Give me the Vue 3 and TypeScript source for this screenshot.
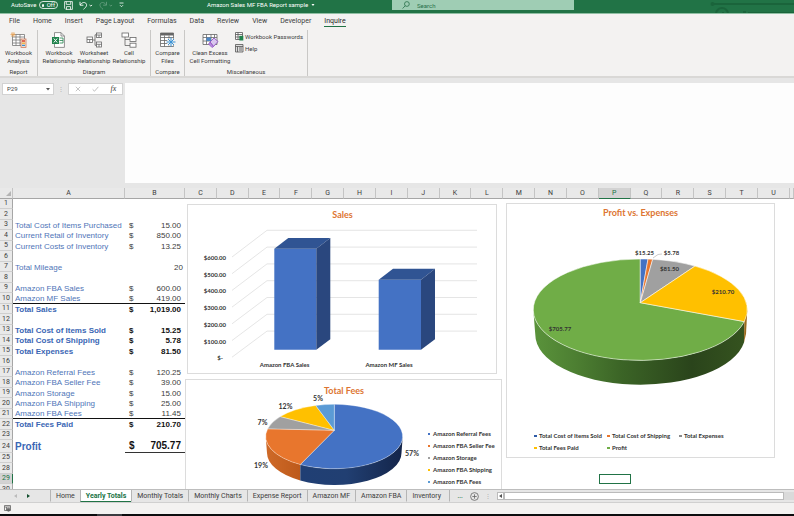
<script setup lang="ts">
import { ref } from 'vue'

interface SheetRow {
  n: number
  label?: string
  amount?: string
  kind?: 'plain' | 'bold' | 'count' | 'profit'
  ruled?: boolean
}

const ribbonTabs: string[] = ['File', 'Home', 'Insert', 'Page Layout', 'Formulas', 'Data', 'Review', 'View', 'Developer', 'Inquire']
const activeRibbon = ref('Inquire')

const sheetTabs: string[] = ['Home', 'Yearly Totals', 'Monthly Totals', 'Monthly Charts', 'Expense Report', 'Amazon MF', 'Amazon FBA', 'Inventory']
const activeSheet = ref('Yearly Totals')

const cellName = ref('P29')
const formula = ref('')
const query = ref('')

const columns: string[] = 'CDEFGHIJKLMNOPQRSTU'.split('')

const rows: SheetRow[] = [
  { n: 1 },
  { n: 2 },
  { n: 3, label: 'Total Cost of Items Purchased', amount: '15.00' },
  { n: 4, label: 'Current Retail of Inventory', amount: '850.00' },
  { n: 5, label: 'Current Costs of Inventory', amount: '13.25' },
  { n: 6 },
  { n: 7, label: 'Total Mileage', amount: '20', kind: 'count' },
  { n: 8 },
  { n: 9, label: 'Amazon FBA Sales', amount: '600.00' },
  { n: 10, label: 'Amazon MF Sales', amount: '419.00', ruled: true },
  { n: 11, label: 'Total Sales', amount: '1,019.00', kind: 'bold' },
  { n: 12 },
  { n: 13, label: 'Total Cost of Items Sold', amount: '15.25', kind: 'bold' },
  { n: 14, label: 'Total Cost of Shipping', amount: '5.78', kind: 'bold' },
  { n: 15, label: 'Total Expenses', amount: '81.50', kind: 'bold' },
  { n: 16 },
  { n: 17, label: 'Amazon Referral Fees', amount: '120.25' },
  { n: 18, label: 'Amazon FBA Seller Fee', amount: '39.00' },
  { n: 19, label: 'Amazon Storage', amount: '15.00' },
  { n: 20, label: 'Amazon FBA Shipping', amount: '25.00' },
  { n: 21, label: 'Amazon FBA Fees', amount: '11.45', ruled: true },
  { n: 22, label: 'Total Fees Paid', amount: '210.70', kind: 'bold' },
  { n: 23 },
  { n: 24, label: 'Profit', amount: '705.77', kind: 'profit' },
  { n: 25 },
  { n: 28 },
  { n: 29 },
  { n: 30 },
]

const axis = ['$600.00', '$500.00', '$400.00', '$300.00', '$200.00', '$100.00', '$-'].map((text, i) => ({
  text,
  front: 53 + i * 16.7,
  back: 26.3 + i * 16.8,
}))

const feeLegend = [
  { text: 'Amazon Referral Fees', color: '#4472c4' },
  { text: 'Amazon FBA Seller Fee', color: '#e8762d' },
  { text: 'Amazon Storage', color: '#a0a0a0' },
  { text: 'Amazon FBA Shipping', color: '#ffc000' },
  { text: 'Amazon FBA Fees', color: '#5b9bd5' },
]

const profitLegend = [
  { text: 'Total Cost of Items Sold', color: '#2f5ca8', x: 28, y: 233 },
  { text: 'Total Cost of Shipping', color: '#e8762d', x: 101, y: 233 },
  { text: 'Total Expenses', color: '#8a8a8a', x: 173, y: 233 },
  { text: 'Total Fees Paid', color: '#ffc000', x: 28, y: 245 },
  { text: 'Profit', color: '#70ad47', x: 101, y: 245 },
]
</script>

<template>
  <div class="app">
    <header class="title-bar">
      <div class="quick">
        <span>AutoSave</span>
        <button class="toggle" type="button" aria-label="AutoSave"><i></i>Off</button>
        <button class="bare" type="button" aria-label="Save">
          <svg width="9" height="9" viewBox="0 0 9 9" fill="none" stroke="#fff" stroke-width=".8"><path d="M.6.6h7.8v7.8H1.8L.6 7.2zM2.3.6v2.8h4.4V.6M2.5 8.4V5.6h4v2.8" /></svg>
        </button>
        <button class="bare" type="button" aria-label="Undo">
          <svg width="14" height="9" viewBox="0 0 14 9" fill="none" stroke="#fff" stroke-width=".9"><path d="M1 .8v3.4h3.4M1.2 4C2.8 1.6 5 .8 6.8 2.2 8.4 3.8 7.5 6 4.5 8.3M10.5 4l1.3 1 1.3-1" /></svg>
        </button>
        <button class="bare faded" type="button" aria-label="Redo">
          <svg width="14" height="9" viewBox="0 0 14 9" fill="none" stroke="#fff" stroke-width=".9"><path d="M7.5.8v3.4H4.1M7.3 4C5.7 1.6 3.5.8 1.7 2.2.2 3.8 1 6 4 8.3M10.5 4l1.3 1 1.3-1" /></svg>
        </button>
        <button class="bare" type="button" aria-label="Customize toolbar">
          <svg width="5" height="6" viewBox="0 0 5 6" fill="none" stroke="#fff" stroke-width=".8"><path d="M.5 1h4M1 3.2l1.5 1.5L4 3.2" /></svg>
        </button>
      </div>
      <div class="doc-name">Amazon Sales MF FBA Report sample <svg width="4" height="3" viewBox="0 0 4 3"><path d="M.5 0h3L2 2z" fill="#fff" /></svg></div>
      <label class="search">
        <svg width="8" height="8" viewBox="0 0 8 8" fill="none" stroke="#28704a" stroke-width=".8"><circle cx="4.9" cy="3" r="2.4" /><path d="M3.2 4.8.6 7.5" /></svg>
        <input v-model="query" type="text" placeholder="Search" aria-label="Search" />
      </label>
      <svg class="ornament" width="84" height="13" viewBox="0 0 84 13" fill="none" stroke="#185f37" stroke-width="2"><circle cx="2.5" cy="4" r="2" fill="#185f37" stroke="none" /><path d="M3 4h81" /><circle cx="12" cy="14" r="6" /><path d="M12 13h2M33 12h3M38 13h46" /></svg>
    </header>

    <nav class="ribbon-tabs">
      <button v-for="t in ribbonTabs" :key="t" type="button" :class="{ active: t === activeRibbon }" @click="activeRibbon = t">{{ t }}</button>
    </nav>

    <section class="ribbon">
      <div class="group g-report">
        <div class="tools">
          <button class="tool" type="button">
            <svg width="17" height="16" viewBox="0 0 17 16"><path d="M2.5 2.5h12v11h-12zM2.5 5h12M2.5 8h12M2.5 11h12M6 2.5v11M10 2.5v11" fill="#fff" stroke="#777" stroke-width=".8" /><path d="M3 0v5M.5 2.5h5M1 .7l4 3.8M5 .7 1 4.5" stroke="#e9a45b" stroke-width=".8" /><rect x="11" y="7" width="5" height="8.5" fill="#f5e3d5" stroke="#c86b4a" stroke-width=".7" /><path d="M12 9h3" stroke="#d6412c" stroke-width="1.5" /><path d="M12 11.2h3" stroke="#f0ad31" stroke-width="1.3" /><path d="M12 13.4h3" stroke="#3b8ed0" stroke-width="1.3" /></svg>
            <span>Workbook<br />Analysis</span>
          </button>
        </div>
        <h2>Report</h2>
      </div>
      <div class="group g-diagram">
        <div class="tools">
          <button class="tool" type="button">
            <svg width="16" height="16" viewBox="0 0 16 16"><path d="M3.5.6H10l3.4 3.4v11.4H3.5z" fill="#fff" stroke="#777" stroke-width=".8" /><path d="M10 .6V4h3.4" fill="none" stroke="#777" stroke-width=".8" /><rect x="1" y="5" width="7" height="7" fill="#21834d" /><path d="m2.8 6.5 3.4 4M6.2 6.5l-3.4 4" stroke="#fff" stroke-width="1" /><path d="M8.5 6H12v5H8.5M8.5 8.5H12" fill="none" stroke="#21834d" stroke-width=".8" /></svg>
            <span>Workbook<br />Relationship</span>
          </button>
          <button class="tool" type="button">
            <svg width="17" height="16" viewBox="0 0 17 16" fill="#fff" stroke="#666" stroke-width=".8"><path d="M6.5 8H9M9 2.8v10.5M9 2.8h2M9 13.3h2" fill="none" /><rect x="1" y="5" width="5.5" height="5.5" /><path d="M1 7.5h5.5M3.7 7.5v3" /><rect x="10.5" y="1" width="5" height="4.5" /><path d="M10.5 3h5M13 3v2.5" /><rect x="10.5" y="10" width="5" height="5" /><path d="M10.5 12.3h5M13 12.3V15" /></svg>
            <span>Worksheet<br />Relationship</span>
          </button>
          <button class="tool" type="button">
            <svg width="17" height="16" viewBox="0 0 17 16" fill="#fff" stroke="#666" stroke-width=".8"><path d="M4 5v8.5h6M4 7.5h6" fill="none" /><rect x="1" y="1" width="6.5" height="4" /><rect x="9" y="5.5" width="6" height="4" /><rect x="9" y="11.2" width="6" height="4" /></svg>
            <span>Cell<br />Relationship</span>
          </button>
        </div>
        <h2>Diagram</h2>
      </div>
      <div class="group g-compare">
        <div class="tools">
          <button class="tool" type="button">
            <svg width="17" height="16" viewBox="0 0 17 16"><path d="M1.5 1h13v13.5h-13zM1.5 5.5h13M1.5 8.5h13M1.5 11.5h13M5.5 3.5v11M10 3.5v11" fill="#fff" stroke="#666" stroke-width=".8" /><path d="M1.5 1h13v2.5h-13z" fill="#666" /><circle cx="12" cy="10" r="4" fill="#f2f1ef" /><path d="M12 5.5v9M7.5 10h9M9 7l6 6M15 7l-6 6" stroke="#3b93d6" stroke-width="1" /></svg>
            <span>Compare<br />Files</span>
          </button>
        </div>
        <h2>Compare</h2>
      </div>
      <div class="group g-misc">
        <div class="tools">
          <button class="tool wide" type="button">
            <svg width="17" height="16" viewBox="0 0 17 16"><path d="M1 2.5h14v10H1zM1 5.5h14M1 9h14M4.5 2.5v10M9 2.5v10M12.5 2.5v3" fill="#fff" stroke="#666" stroke-width=".8" /><rect x="4.5" y="5.5" width="4.5" height="3.5" fill="#4c87c7" /><path d="m8 10 4-4 4 3.5-4.5 5z" fill="#d9c7ee" stroke="#8c52c0" stroke-width=".9" /><path d="m8 10 3.5 4.5-1.5 1L6.5 12z" fill="#b98be0" stroke="#8c52c0" stroke-width=".7" /></svg>
            <span>Clean Excess<br />Cell Formatting</span>
          </button>
          <div class="small-tools">
            <button type="button">
              <svg width="9" height="9" viewBox="0 0 9 9"><path d="M.5.5h7v7h-7zM.5 2.5h7M.5 5h7M3 .5v7" fill="#fff" stroke="#555" stroke-width=".8" /><rect x="4.3" y="3.8" width="4" height="4.7" fill="#21834d" /></svg>
              Workbook Passwords
            </button>
            <button type="button">
              <svg width="9" height="9" viewBox="0 0 9 9"><path d="M.5.5H8V8H.5zM.5 2.5H8M2.5 2.5V8M4 4h3M4 6h3" fill="#ddd" stroke="#555" stroke-width=".8" /></svg>
              Help
            </button>
          </div>
        </div>
        <h2>Miscellaneous</h2>
      </div>
    </section>

    <section class="formula-row">
      <div class="name-box">
        <input v-model="cellName" type="text" aria-label="Name box" />
        <svg width="4" height="3" viewBox="0 0 4 3"><path d="M0 0h4L2 2.6z" fill="#555" /></svg>
      </div>
      <span class="grip">⋮</span>
      <div class="formula-buttons">
        <button type="button" aria-label="Cancel"><svg width="6" height="6" viewBox="0 0 6 6"><path d="m.8.8 4.4 4.4M5.2.8.8 5.2" stroke="#b5b5b5" stroke-width=".8" /></svg></button>
        <button type="button" aria-label="Enter"><svg width="7" height="6" viewBox="0 0 7 6"><path d="m.6 3.3 1.9 1.9L6.4.8" fill="none" stroke="#b5b5b5" stroke-width=".9" /></svg></button>
        <button type="button" class="fx">fx</button>
      </div>
      <textarea v-model="formula" aria-label="Formula bar"></textarea>
    </section>

    <main class="sheet">
      <table>
        <colgroup>
          <col class="c-head" /><col class="c-a" /><col class="c-b" />
          <col v-for="c in columns" :key="c" />
          <col class="c-last" />
        </colgroup>
        <thead>
          <tr>
            <th class="corner"><svg width="5" height="5" viewBox="0 0 5 5"><path d="M5 0v5H0z" fill="#b4b4b4" /></svg></th>
            <th>A</th>
            <th>B</th>
            <th v-for="c in columns" :key="c" :class="{ picked: c === 'P' }">{{ c }}</th>
            <th></th>
          </tr>
        </thead>
        <tbody>
          <tr v-for="r in rows" :key="r.n" :class="[r.kind, { ruled: r.ruled, tall: r.n === 24 }]">
            <th :class="{ picked: r.n === 29 }">{{ r.n }}</th>
            <td class="label">{{ r.label }}</td>
            <td class="amount">
              <div v-if="r.amount"><span v-if="r.kind !== 'count'">$</span><span class="value">{{ r.amount }}</span></div>
            </td>
            <template v-if="r.n === 29">
              <td colspan="13"></td>
              <td class="selected"></td>
              <td colspan="6"></td>
            </template>
            <td v-else colspan="20"></td>
          </tr>
        </tbody>
      </table>

      <div class="charts">
        <div class="chart-column">
          <svg class="chart sales" viewBox="0 0 310 170" role="img" aria-label="Sales">
            <text class="chart-title" x="155.5" y="14" text-anchor="middle">Sales</text>
            <path v-for="a in axis" :key="a.text" :d="`M45 ${a.front}L80 ${a.back}H290`" fill="none" stroke="#dedede" stroke-width=".8" />
            <text v-for="a in axis" :key="a.text" class="axis" :x="a.text === '$-' ? 36 : 39" :y="a.front + 3" text-anchor="end">{{ a.text }}</text>
            <g>
              <path d="M87.3 44.7h42v101h-42z" fill="#4472c4" />
              <path d="M87.3 44.7 101.3 34h42l-14 10.7z" fill="#305493" />
              <path d="m129.3 44.7 14-10.7v101.3l-14 10.4z" fill="#2a477e" />
              <path d="M191.7 75.7H234v70h-42.3z" fill="#4472c4" />
              <path d="m191.7 75.7 14.3-11h42l-14 11z" fill="#305493" />
              <path d="m234 75.7 14-11v70.6l-14 10.4z" fill="#2a477e" />
            </g>
            <text class="axis" x="97.5" y="163" text-anchor="middle">Amazon FBA Sales</text>
            <text class="axis" x="202" y="163" text-anchor="middle">Amazon MF Sales</text>
          </svg>

          <svg class="chart" viewBox="0 0 317 125" role="img" aria-label="Total Fees">
            <defs>
              <linearGradient id="navy"><stop offset="0" stop-color="#203f74" /><stop offset=".45" stop-color="#213f72" /><stop offset="1" stop-color="#14254a" /></linearGradient>
              <linearGradient id="rust"><stop offset="0" stop-color="#cf6a28" /><stop offset="1" stop-color="#bd5a1b" /></linearGradient>
            </defs>
            <text class="chart-title" x="159" y="15" text-anchor="middle">Total Fees</text>
            <path d="M80.7 57.5A68.5 32.2 0 0 0 115.3 85.5V101.5A67 32 0 0 1 82 74z" fill="url(#rust)" />
            <path d="M115.3 85.5A68.5 32.2 0 0 0 217.7 57.5L216.5 74A67 32 0 0 1 115.3 101.5z" fill="url(#navy)" />
            <g stroke="#fff" stroke-opacity=".55" stroke-width=".6">
              <path d="M149.3 51.3V25.3A68.5 32.2 0 1 1 115.3 85.5z" fill="#4472c4" />
              <path d="M149.3 51.3 115.3 85.5A68.5 32.2 0 0 1 82.7 49.8z" fill="#e8762d" />
              <path d="M149.3 51.3 82.7 49.8A68.5 32.2 0 0 1 95.3 37.6z" fill="#a0a0a0" />
              <path d="M149.3 51.3 95.3 37.6A68.5 32.2 0 0 1 130.7 26.5z" fill="#ffc000" />
              <path d="M149.3 51.3 130.7 26.5A68.5 32.2 0 0 1 149.3 25.3z" fill="#5b9bd5" />
            </g>
            <g class="percent" text-anchor="middle">
              <text x="133" y="22">5%</text>
              <text x="100.5" y="30">12%</text>
              <text x="77.5" y="46">7%</text>
              <text x="76" y="89">19%</text>
              <text x="227" y="77">57%</text>
            </g>
            <g v-for="(f, i) in feeLegend" :key="f.text">
              <rect x="243" :y="54 + i * 12" width="2" height="2" :fill="f.color" />
              <text class="legend" x="248" :y="57 + i * 12">{{ f.text }}</text>
            </g>
          </svg>
        </div>

        <svg class="chart" viewBox="0 0 269 255" role="img" aria-label="Profit vs. Expenses">
          <defs>
            <linearGradient id="forest"><stop offset="0" stop-color="#5a933b" /><stop offset=".2" stop-color="#4d7f32" /><stop offset=".42" stop-color="#3b6426" /><stop offset=".75" stop-color="#2a441b" /><stop offset="1" stop-color="#35531f" /></linearGradient>
          </defs>
          <text class="chart-title" x="134.5" y="13" text-anchor="middle">Profit vs. Expenses</text>
          <path d="M27.3 106.7A107 50.7 0 0 0 238.3 118.6L238 139.5A105 50 0 0 1 29.3 131.7z" fill="url(#forest)" />
          <path d="M238.3 118.6 241.3 107 240 131 238 139.5z" fill="#9a6a1c" />
          <g stroke="#fff" stroke-opacity=".65" stroke-width=".8">
            <path d="M134.3 99.7 238.3 118.6A107 50.7 0 1 1 134.3 56z" fill="#70ad47" />
            <path d="M134.3 99.7V56A107 50.7 0 0 1 142 56.1z" fill="#4472c4" />
            <path d="M134.3 99.7 142 56.1A107 50.7 0 0 1 146.7 56.3z" fill="#e8762d" />
            <path d="M134.3 99.7 146.7 56.3A107 50.7 0 0 1 189 63.1z" fill="#a0a0a0" />
            <path d="M134.3 99.7 189 63.1A107 50.7 0 0 1 238.3 118.6z" fill="#ffc000" />
          </g>
          <path d="M147 55 152 51.5 156 51" fill="none" stroke="#aaa" stroke-width=".6" />
          <g class="axis" text-anchor="middle">
            <text x="138.5" y="52">$15.25</text>
            <text x="165.5" y="52">$5.78</text>
            <text x="163.5" y="68">$81.50</text>
            <text x="217" y="91">$210.70</text>
            <text x="54" y="128">$705.77</text>
          </g>
          <g v-for="p in profitLegend" :key="p.text">
            <rect :x="p.x" :y="p.y - 1" width="3" height="2" :fill="p.color" />
            <text class="legend" :x="p.x + 5" :y="p.y + 2">{{ p.text }}</text>
          </g>
        </svg>
      </div>
    </main>

    <footer class="sheet-bar">
      <div class="arrows">
        <button type="button" aria-label="Previous sheet"><svg width="3" height="4" viewBox="0 0 3 4"><path d="M3 0v4L0 2z" fill="#bbb" /></svg></button>
        <button type="button" aria-label="Next sheet"><svg width="3" height="4" viewBox="0 0 3 4"><path d="M0 0v4l3-2z" fill="#134f2e" /></svg></button>
      </div>
      <nav class="sheet-tabs">
        <button v-for="t in sheetTabs" :key="t" type="button" :class="{ active: t === activeSheet }" @click="activeSheet = t">{{ t }}</button>
      </nav>
      <button class="more" type="button" aria-label="More sheets">...</button>
      <button class="add" type="button" aria-label="New sheet"><svg width="9" height="9" viewBox="0 0 9 9" fill="none" stroke="#666" stroke-width=".8"><circle cx="4.5" cy="4.5" r="3.9" /><path d="M4.5 2.3v4.4M2.3 4.5h4.4" /></svg></button>
      <span class="grip wide-grip">⋮</span>
      <div class="scroller">
        <button type="button" aria-label="Scroll left"><svg width="3" height="4" viewBox="0 0 3 4"><path d="M3 0v4L0 2z" fill="#555" /></svg></button>
        <div class="thumb"></div>
      </div>
    </footer>
    <div class="status-bar">
      <svg width="7" height="7" viewBox="0 0 7 7" fill="none" stroke="#666" stroke-width=".8"><path d="M.5.5h6v5h-6zM.5 2h6M2.5 2v3.5" /><circle cx="4.5" cy="4.7" r="1.5" fill="#666" /></svg>
    </div>
    <div class="taskbar"><i></i></div>
  </div>
</template>

<style>
body {
  margin: 0;
}
</style>

<style scoped>
.app {
  display: flex;
  flex-direction: column;
  height: 100vh;
  overflow: hidden;
  background: #fff;
  color: #3c3c3c;
  font-family: Roboto, 'Open Sans', sans-serif;
  font-size: 6px;
  line-height: 8px;
}
button,
input,
textarea {
  margin: 0;
  padding: 0;
  border: 0;
  background: none;
  color: inherit;
  font: inherit;
  outline: none;
}
svg {
  display: block;
  flex: none;
}

.title-bar {
  display: grid;
  grid-template-columns: 207px 185px 182px 1fr;
  height: 13px;
  flex: none;
  background: #217346;
  border-bottom: 1px solid #8fbfa3;
  color: #fff;
  overflow: hidden;
}
.quick {
  display: flex;
  align-items: center;
  height: 10px;
  gap: 6px;
  padding-left: 11px;
}
.quick > span {
  width: 24px;
}
.toggle {
  display: flex;
  align-items: center;
  gap: 3px;
  width: 19px;
  height: 8px;
  margin-left: -2px;
  padding: 0 2px;
  box-sizing: border-box;
  border: 1px solid #d5e5db;
  border-radius: 4px;
  font-size: 6px;
  line-height: 6px;
}
.toggle i {
  width: 3px;
  height: 3px;
  border-radius: 50%;
  background: #fff;
}
.faded {
  opacity: 0.3;
}
.doc-name {
  display: flex;
  align-items: center;
  gap: 3px;
  height: 10px;
}
.search {
  display: flex;
  align-items: center;
  gap: 7px;
  height: 10px;
  padding-left: 10px;
  background: #9fcdb4;
  color: #28704a;
}
.search input {
  flex: 1;
  min-width: 0;
  height: 10px;
}
.search input::placeholder {
  color: #28704a;
  opacity: 1;
}
.ornament {
  justify-self: end;
  opacity: 0.7;
}

.ribbon-tabs {
  display: flex;
  flex: none;
  gap: 13px;
  height: 14px;
  padding: 1px 9px 0;
  background: #f3f2f1;
}
.ribbon-tabs button {
  height: 12px;
  border-bottom: 1px solid transparent;
  font-size: 7px;
}
.ribbon-tabs .active {
  border-bottom-color: #217346;
  color: #262626;
}

.ribbon {
  display: flex;
  flex: none;
  height: 46px;
  padding-top: 1px;
  background: #f3f2f1;
  border-bottom: 2px solid #d9d8d6;
}
.group {
  display: flex;
  flex-direction: column;
  justify-content: space-between;
  box-sizing: border-box;
  height: 46px;
  border-right: 1px solid #c9c8c6;
}
.g-report {
  width: 38px;
}
.g-diagram {
  width: 113px;
}
.g-compare {
  width: 34px;
}
.g-misc {
  width: 123px;
}
.group h2 {
  margin: 0;
  font-size: 6px;
  font-weight: 400;
  line-height: 8px;
  text-align: center;
}
.tools {
  display: flex;
  justify-content: center;
  padding-top: 2px;
}
.tool {
  display: flex;
  flex-direction: column;
  align-items: center;
  gap: 1px;
  width: 35px;
  white-space: nowrap;
}
.g-misc .tools {
  justify-content: flex-start;
}
.tool.wide {
  width: 50px;
}
.tool span {
  text-align: center;
}
.small-tools {
  display: flex;
  flex-direction: column;
  align-items: flex-start;
  gap: 3px;
}
.small-tools button {
  display: flex;
  align-items: center;
  gap: 1px;
  white-space: nowrap;
}

.formula-row {
  display: flex;
  flex: none;
  align-items: flex-start;
  padding: 5px 0 5px 2px;
  background: #e6e6e6;
}
.name-box {
  display: flex;
  align-items: center;
  box-sizing: border-box;
  width: 52px;
  height: 12px;
  padding: 0 3px 0 4px;
  background: #fff;
  border: 1px solid #d2d2d2;
}
.name-box input {
  flex: 1;
  min-width: 0;
}
.grip {
  width: 14px;
  color: #aaa;
  line-height: 12px;
  text-align: center;
}
.formula-buttons {
  display: flex;
  align-items: center;
  justify-content: space-around;
  box-sizing: border-box;
  width: 55px;
  height: 12px;
  background: #fff;
  border: 1px solid #d2d2d2;
}
.fx {
  font-family: 'Liberation Serif', serif;
  font-size: 8px;
  font-style: italic;
}
.formula-row textarea {
  flex: 1;
  height: 100px;
  margin-left: 2px;
  background: #fdfdfd;
  resize: none;
}

.sheet {
  position: relative;
  flex: 1;
  min-height: 0;
  overflow: hidden;
}
table {
  width: 100%;
  table-layout: fixed;
  border-collapse: separate;
  border-spacing: 0;
  font-family: 'Liberation Sans', sans-serif;
  font-size: 8px;
}
.c-head {
  width: 13px;
}
.c-a {
  width: 112px;
}
.c-b {
  width: 60px;
}
.c-last {
  width: 4px;
}
th,
td {
  box-sizing: border-box;
  height: 10px;
  padding: 0;
  line-height: 9px;
  white-space: nowrap;
}
th {
  background: #e9e9e9;
  color: #3c3c3c;
  font-family: Roboto, 'Open Sans', sans-serif;
  font-size: 7px;
  font-weight: 400;
  text-align: center;
}
thead th {
  height: 11px;
  padding-top: 1px;
  border-right: 1px solid #c4c4c4;
  border-bottom: 1px solid #a6a6a6;
}
tbody th {
  border-right: 1px solid #a6a6a6;
  border-bottom: 1px solid #cfcfcf;
}
tbody tr:nth-child(even) > * {
  height: 11px;
}
tbody tr.tall > * {
  height: 13px;
}
th.picked {
  background: #d3d3d3;
  color: #217346;
}
thead th.picked {
  border-bottom-color: #217346;
}
tbody th.picked {
  border-right-color: #217346;
}
.corner svg {
  margin-left: 6px;
}
.label {
  padding-left: 2px;
  color: #4f75b8;
}
.amount div {
  display: flex;
  justify-content: space-between;
  padding: 0 4px;
}
.count .amount div {
  justify-content: flex-end;
  padding-right: 2px;
}
.ruled .label,
.ruled .amount {
  border-bottom: 1px solid #111;
}
.bold td,
.profit td {
  color: #111;
  font-weight: 700;
}
.bold .label,
.profit .label {
  color: #3a66b4;
}
.profit td {
  font-size: 10px;
  line-height: 12px;
}
.profit .amount {
  border-bottom: 1px solid #333;
}
.selected {
  border: 1px solid #217346;
}

.charts {
  position: absolute;
  top: 15px;
  left: 185px;
  right: 19px;
  display: grid;
  grid-template-columns: 317fr 269fr;
  align-items: start;
  gap: 4px;
}
.chart-column {
  display: flex;
  flex-direction: column;
  gap: 5px;
  padding-top: 1px;
}
.chart {
  display: block;
  width: 100%;
  height: auto;
  background: #fff;
  outline: 1px solid #dcdcdc;
  outline-offset: -1px;
  font-family: Lato, 'Open Sans', sans-serif;
}
.chart.sales {
  width: auto;
  margin: 0 5px 0 2px;
}
.chart-title {
  fill: #dd7532;
  font-size: 9px;
  font-weight: 700;
}
.axis,
.legend {
  fill: #333;
  font-size: 6px;
  font-weight: 700;
}
.percent {
  fill: #333;
  font-size: 7px;
  font-weight: 700;
}

.sheet-bar {
  display: flex;
  flex: none;
  align-items: center;
  height: 14px;
  background: #e6e6e6;
  border-top: 1px solid #bdbdbd;
  border-bottom: 1px solid #d0d0d0;
  box-sizing: border-box;
}
.arrows {
  display: flex;
  gap: 10px;
  width: 50px;
  padding-left: 14px;
  box-sizing: border-box;
}
.sheet-tabs {
  display: flex;
  align-self: stretch;
}
.sheet-tabs button {
  padding: 0 5px;
  border-left: 1px solid #b5b5b5;
  border-bottom: 1px solid transparent;
  font-size: 7px;
  white-space: nowrap;
}
.sheet-tabs button:last-child {
  padding-right: 8px;
  border-right: 1px solid #b5b5b5;
}
.sheet-tabs .active {
  background: #fff;
  border-bottom-color: #217346;
  color: #217346;
  font-weight: 700;
}
.more {
  width: 20px;
  color: #217346;
  font-weight: 700;
}
.wide-grip {
  width: 18px;
}
.scroller {
  display: flex;
  flex: 1;
  height: 8px;
  padding-right: 10px;
  background: #dadada;
}
.scroller button {
  display: flex;
  align-items: center;
  justify-content: center;
  width: 7px;
  background: #fff;
  border: 1px solid #bbb;
  box-sizing: border-box;
}
.thumb {
  flex: 1;
  background: #fff;
  border: 1px solid #bbb;
}

.status-bar {
  display: flex;
  flex: none;
  align-items: center;
  height: 11px;
  padding-left: 4px;
  background: #f3f2f1;
}
.taskbar {
  flex: none;
  height: 2px;
  padding-left: 97px;
  background: #0c0c0e;
}
.taskbar i {
  display: block;
  width: 25px;
  height: 2px;
  background: #3a3b40;
}
</style>
